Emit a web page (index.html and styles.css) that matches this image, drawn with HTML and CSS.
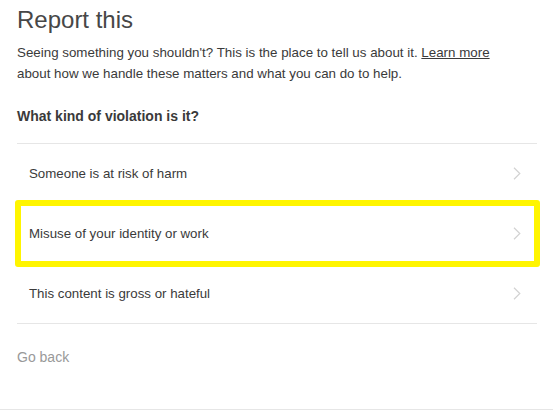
FILE: index.html
```html
<!DOCTYPE html>
<html lang="en">
<head>
<meta charset="utf-8">
<title>Report this</title>
<link rel="stylesheet" href="styles.css">
</head>
<body>
<div class="page">
  <div class="content">
    <h1 class="title">Report this</h1>
    <p class="intro">Seeing something you shouldn't? This is the place to tell us about it. <a class="link" href="#">Learn more</a> about how we handle these matters and what you can do to help.</p>
    <h2 class="question">What kind of violation is it?</h2>
    <ul class="options">
      <li class="option"><span class="label">Someone is at risk of harm</span><svg class="chev" width="8" height="13" viewBox="0 0 8 13"><path d="M1 0.8 L6.8 6.5 L1 12.2" fill="none" stroke="#d2d2d2" stroke-width="1.2"/></svg></li>
      <li class="option highlighted"><span class="label">Misuse of your identity or work</span><svg class="chev" width="8" height="13" viewBox="0 0 8 13"><path d="M1 0.8 L6.8 6.5 L1 12.2" fill="none" stroke="#d2d2d2" stroke-width="1.2"/></svg><span class="marker"></span></li>
      <li class="option"><span class="label">This content is gross or hateful</span><svg class="chev" width="8" height="13" viewBox="0 0 8 13"><path d="M1 0.8 L6.8 6.5 L1 12.2" fill="none" stroke="#d2d2d2" stroke-width="1.2"/></svg></li>
    </ul>
    <a class="back" href="#">Go back</a>
  </div>
</div>
</body>
</html>
```
FILE: styles.css
```css
html, body {
  margin: 0;
  padding: 0;
  background: #fff;
}
body {
  font-family: "Liberation Sans", Arial, Helvetica, sans-serif;
  color: #333;
}
.page {
  height: 409px;
  border-bottom: 1px solid #e6e6e6;
  overflow: hidden;
}
.content {
  padding: 6px 16px 0 17px;
}
.title {
  margin: 0;
  font-size: 24px;
  line-height: 28px;
  font-weight: normal;
  color: #474747;
}
.intro {
  margin: 8px 0 0;
  max-width: 500px;
  font-size: 13.35px;
  line-height: 21px;
  color: #3a3a3a;
}
.link {
  color: #3a3a3a;
  text-decoration: underline;
}
.question {
  margin: 22px 0 0;
  font-size: 14px;
  line-height: 21px;
  font-weight: bold;
  color: #3a3a3a;
}
.options {
  list-style: none;
  margin: 16px 0 0;
  padding: 0;
  border-top: 1px solid #e6e6e6;
  border-bottom: 1px solid #e6e6e6;
}
.option {
  position: relative;
  height: 60px;
  display: flex;
  align-items: center;
  justify-content: space-between;
  padding: 0 16px 1px 12px;
  box-sizing: border-box;
  font-size: 13.3px;
  color: #3a3a3a;
}
.option:last-child {
  height: 59px;
}
.chev {
  display: block;
}
.marker {
  position: absolute;
  left: -2px;
  right: -3px;
  top: -4px;
  bottom: -3px;
  border: 6px solid #fff500;
  border-radius: 3px;
  pointer-events: none;
}
.back {
  display: block;
  margin-top: 23px;
  font-size: 14px;
  line-height: 21px;
  color: #999;
  text-decoration: none;
}
```
